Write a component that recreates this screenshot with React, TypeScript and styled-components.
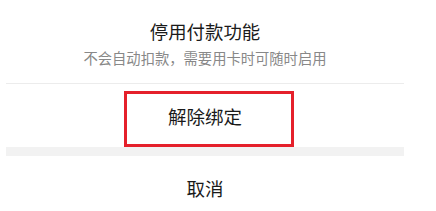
import React from "react";
import styled, { createGlobalStyle } from "styled-components";

const GlobalStyle = createGlobalStyle`
  html, body {
    margin: 0;
    padding: 0;
    background: #ffffff;
  }
  body {
    font-family: "Noto Sans CJK SC", "Noto Sans", sans-serif;
    -webkit-font-smoothing: antialiased;
  }
`;

const Page = styled.div`
  width: 436px;
  height: 211px;
  overflow: hidden;
  background: #ffffff;
`;

const Sheet = styled.div`
  width: 398px;
  margin-left: 6px;
  display: flex;
  flex-direction: column;
`;

const Header = styled.div`
  display: flex;
  flex-direction: column;
  align-items: center;
  padding: 19px 0 15px;
  gap: 5px;
  border-bottom: 1px solid #ececec;
`;

const Title = styled.div`
  font-size: 18.4px;
  line-height: 24px;
  color: #1a1a1a;
`;

const Subtitle = styled.div`
  font-size: 14.3px;
  line-height: 20px;
  color: #888888;
`;

const ActionRow = styled.div<{ $height: number }>`
  position: relative;
  height: ${(p) => p.$height}px;
  display: flex;
  align-items: center;
  justify-content: center;
  font-size: 18.5px;
  color: #1a1a1a;
`;

const Highlight = styled.div`
  position: absolute;
  left: 118px;
  top: 7px;
  width: 164px;
  height: 50px;
  border: 3px solid #e5202b;
  pointer-events: none;
`;

const Gap = styled.div`
  height: 9px;
  background: #f2f2f2;
`;

export default function App() {
  return (
    <>
      <GlobalStyle />
      <Page>
        <Sheet>
          <Header>
            <Title>停用付款功能</Title>
            <Subtitle>不会自动扣款，需要用卡时可随时启用</Subtitle>
          </Header>
          <ActionRow $height={63}>
            解除绑定
            <Highlight />
          </ActionRow>
          <Gap />
          <ActionRow $height={64}>取消</ActionRow>
        </Sheet>
      </Page>
    </>
  );
}
